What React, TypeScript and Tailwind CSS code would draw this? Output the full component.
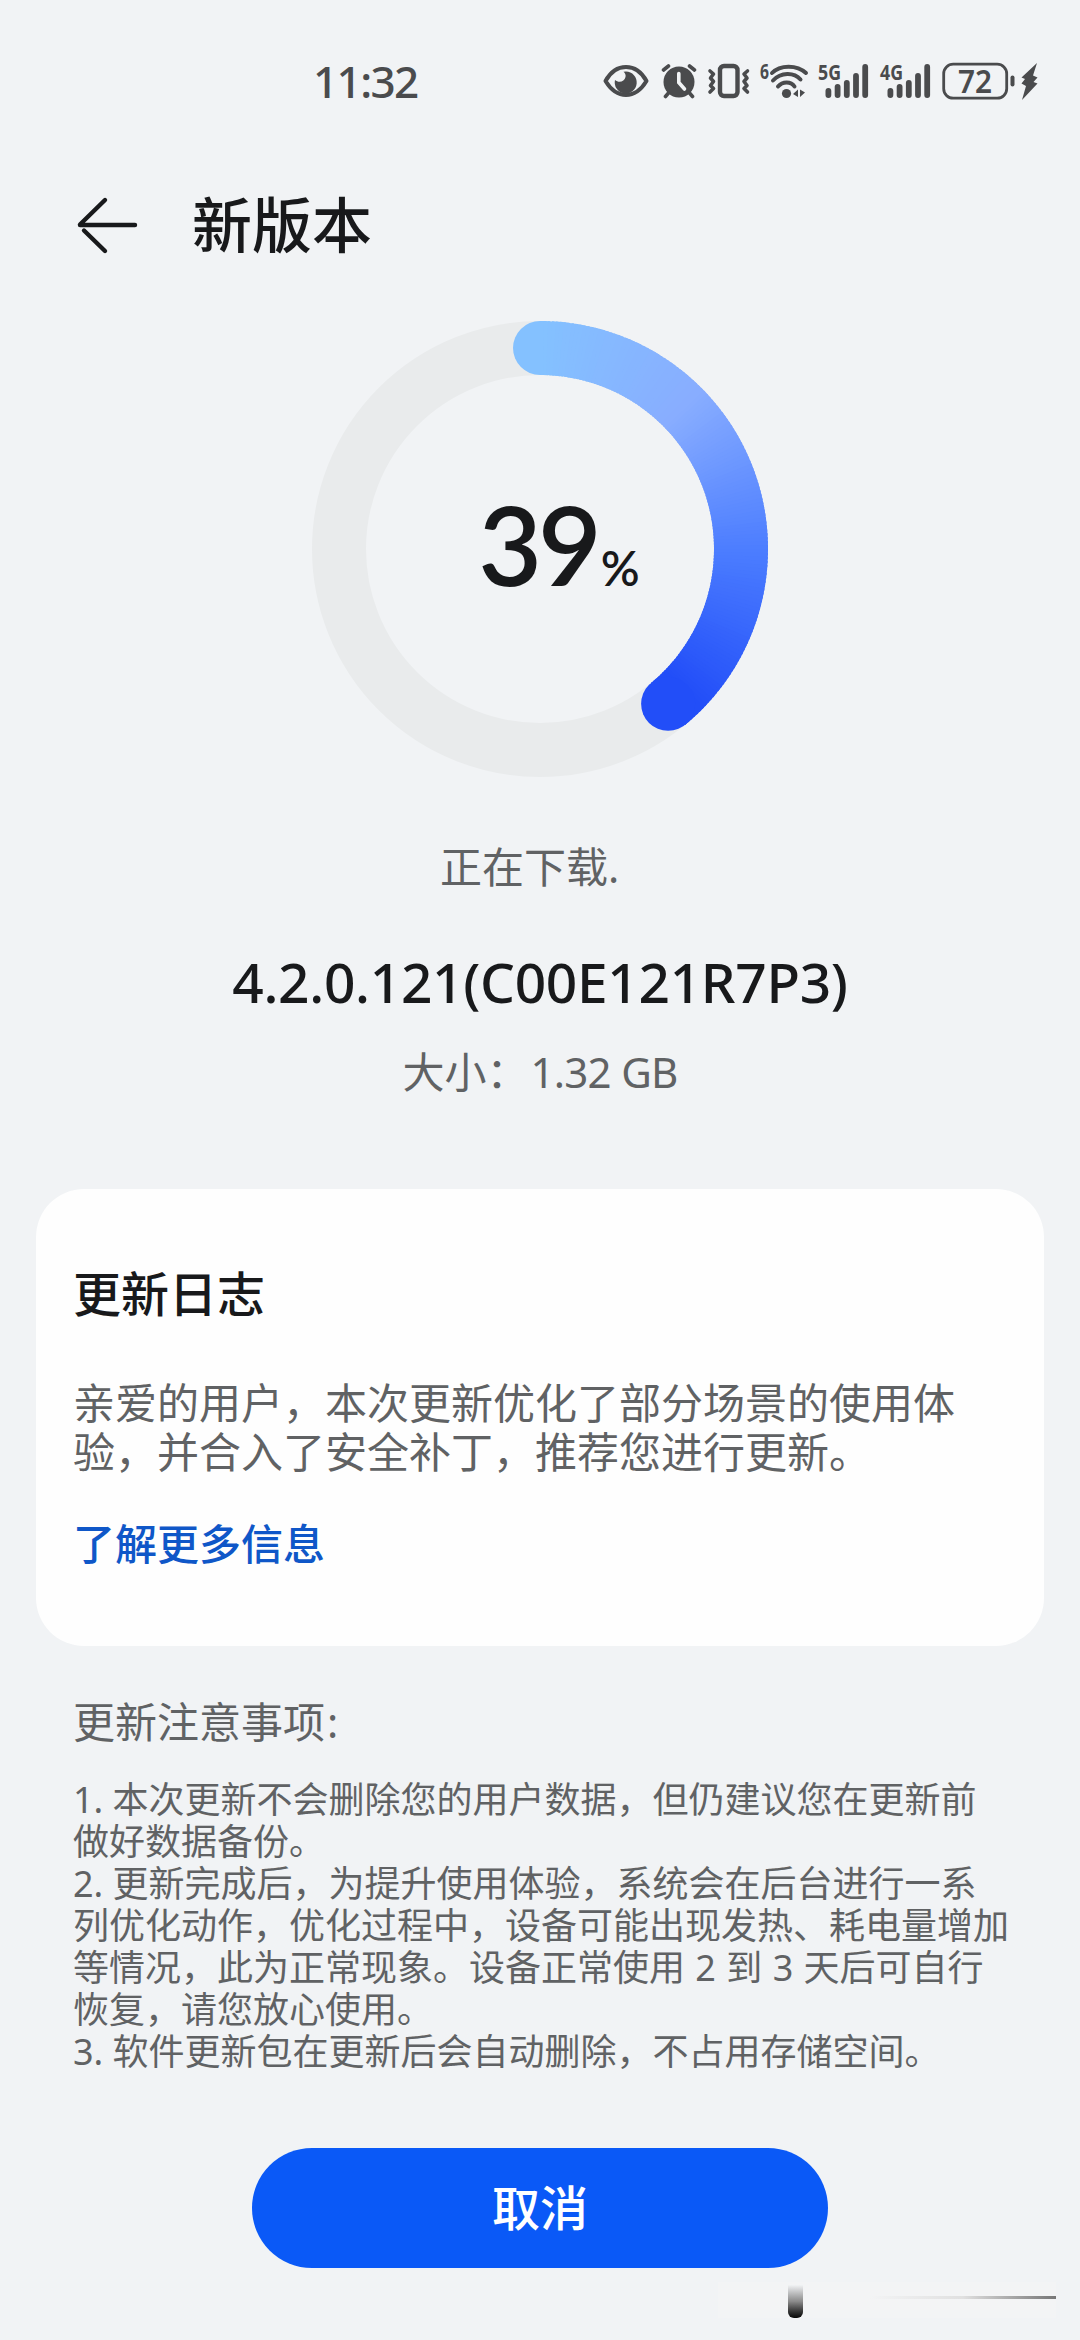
import type { ReactNode } from "react";

const NOTES = [
  "1. 本次更新不会删除您的用户数据，但仍建议您在更新前",
  "做好数据备份。",
  "2. 更新完成后，为提升使用体验，系统会在后台进行一系",
  "列优化动作，优化过程中，设备可能出现发热、耗电量增加",
  "等情况，此为正常现象。设备正常使用 2 到 3 天后可自行",
  "恢复，请您放心使用。",
  "3. 软件更新包在更新后会自动删除，不占用存储空间。",
];

const PROGRESS = 39;

// Colour stops along the arc: [degrees from the top, r, g, b]
const STOPS = [
  [0, 132, 193, 255],
  [45, 136, 173, 255],
  [90, 76, 125, 255],
  [134, 34, 78, 248],
  [360, 34, 78, 248],
];

function arcColor(deg: number) {
  const i = Math.max(
    0,
    STOPS.findIndex((s) => deg <= s[0]) - 1
  );
  const from = STOPS[i];
  const to = STOPS[i + 1];
  const t = (deg - from[0]) / (to[0] - from[0]);
  const ch = [1, 2, 3].map((k) => Math.round(from[k] + (to[k] - from[k]) * t));
  return `rgb(${ch.join(",")})`;
}

function point(deg: number, r: number) {
  const a = (deg * Math.PI) / 180;
  return [229 + r * Math.sin(a), 229 - r * Math.cos(a)];
}

export default function App() {
  return (
    <div className="flex h-[2340px] w-[1080px] flex-col overflow-hidden bg-[#f1f3f5] font-['Noto_Sans','Noto_Sans_CJK_SC',sans-serif] text-[#606264]">
      <StatusBar />

      <header className="mt-[15px] flex h-24 items-center pl-[76px]">
        <svg width="64" height="60" viewBox="0 0 64 60" fill="none" stroke="#18191b" strokeWidth="4.4" strokeLinecap="round">
          <path d="M4 30H59M29 5L4 29.500" />
          <path d="M8 35.500L29 56" />
        </svg>
        <h1 className="ml-[52px] text-[60px] leading-[96px] font-medium text-[#18191b]">
          新版本
        </h1>
      </header>

      <section className="flex flex-col items-center">
        <ProgressRing />
        <p className="mt-[61px] w-[200px] text-[42px] leading-[56px]">正在下载.</p>
        <h2 className="mt-[51px] text-[55px] leading-[72px] font-medium tracking-[-0.3px] whitespace-nowrap text-[#18191b]">
          4.2.0.121(C00E121R7P3)
        </h2>
        <p className="mt-[26px] text-[42px] leading-[56px]">
          大小：<span className="ml-[2px] tracking-[-0.7px]">1.32 GB</span>
        </p>
      </section>

      <section className="mx-9 mt-[89px] h-[457px] rounded-[48px] bg-[#fefefe] px-[37px]">
        <h3 className="mt-[71px] text-[48px] leading-[68px] font-medium text-[#18191b]">
          更新日志
        </h3>
        <p className="mt-[50px] text-[42px] leading-[49px] whitespace-nowrap">
          亲爱的用户，本次更新优化了部分场景的使用体
          <br />
          验，并合入了安全补丁，推荐您进行更新。
        </p>
        <a className="mt-[40px] block text-[42px] leading-[56px] font-medium text-[#0f57c8]">
          了解更多信息
        </a>
      </section>

      <section className="mt-[48px] px-[73px]">
        <h4 className="text-[42px] leading-[56px]">
          更新注意事项<span className="ml-[2px]">:</span>
        </h4>
        <div className="mt-[29px] text-[36px] leading-[42px] whitespace-nowrap">
          {NOTES.map((line) => (
            <p key={line} className="not-first:nth-5:[word-spacing:1px]">
              {line}
            </p>
          ))}
        </div>
      </section>

      <button className="mt-[75px] h-[120px] w-[576px] self-center rounded-full bg-[#0a59f7] text-[48px] font-medium text-white">
        取消
      </button>

      <CornerStreak />
    </div>
  );
}

function ProgressRing() {
  const end = PROGRESS * 3.6;
  const segments = Array.from({ length: Math.ceil(end) }, (_, i) => i);
  const [ex, ey] = point(end, 201);

  return (
    <div className="mt-[47px] grid h-[458px] w-[458px] place-items-center">
      <svg className="col-start-1 row-start-1" width="458" height="458" viewBox="0 0 458 458" fill="none">
        <circle cx="229" cy="229" r="201" stroke="#e9ebec" strokeWidth="54" />
        <circle cx="229" cy="28" r="27" fill={arcColor(0)} />
        {segments.map((deg) => {
          const [x1, y1] = point(deg, 201);
          const [x2, y2] = point(Math.min(deg + 1.6, end), 201);
          return (
            <path
              key={deg}
              d={`M${x1} ${y1}A201 201 0 0 1 ${x2} ${y2}`}
              stroke={arcColor(deg)}
              strokeWidth="54"
            />
          );
        })}
        <circle cx={ex} cy={ey} r="27" fill={arcColor(end)} />
      </svg>
      <div className="col-start-1 row-start-1 mb-[12px] ml-[38px] flex items-baseline font-['Lato',sans-serif] text-[#18191b]">
        <span className="text-[110px] leading-[120px] font-semibold tracking-[-4px]">{PROGRESS}</span>
        <span className="ml-[3px] text-[48px] font-semibold">%</span>
      </div>
    </div>
  );
}

function StatusBar() {
  return (
    <div className="flex h-[162px] items-center text-[#4a4b4d]">
      <span className="ml-[313px] w-[290px] text-[44px] leading-[60px] font-medium tracking-[-1.6px]">
        11:32
      </span>
      <StatusIcons />
    </div>
  );
}

function StatusIcons() {
  return (
    <div className="flex items-center">
      {/* Eye comfort */}
      <svg width="46" height="36" viewBox="0 0 46 36" fill="none">
        <path d="M2.500 18C8 8 15 4 23 4S38 8 43.500 18C38 27 31 32 23 32S8 27 2.500 18Z" stroke="currentColor" strokeWidth="4" strokeLinejoin="round" />
        <path d="M23 8.500A11 11 0 1 1 12 17C16 20.500 21.500 18.500 22.500 14C23 11.800 22 10 20.500 8.800Z" fill="currentColor" />
      </svg>
      {/* Alarm */}
      <svg className="ml-3" width="36" height="36" viewBox="0 0 36 36" fill="none" stroke="currentColor" strokeWidth="4" strokeLinecap="round">
        <circle cx="18" cy="19" r="15.500" fill="currentColor" stroke="none" />
        <path d="M2.500 7L7.500 3M33.500 7L28.500 3M7.500 30L4.500 33.500M28.500 30L31.500 33.500" strokeWidth="3.600" />
        <path d="M17.800 10.500V19.500L23.500 26" stroke="#f1f3f5" strokeWidth="3.600" />
      </svg>
      {/* Vibrate */}
      <svg className="ml-[10px]" width="44" height="36" viewBox="0 0 44 36" fill="none" stroke="currentColor" strokeWidth="4">
        <rect x="13" y="3" width="17.500" height="30" rx="4" strokeWidth="4.400" />
        <path d="M3 8L6.500 11L3.500 15L6.500 18.500L3.500 22.500L6.500 25.500L3 29" strokeLinecap="round" strokeLinejoin="round" strokeWidth="3.600" />
        <path d="M40.500 8L37 11L40 15L37 18.500L40 22.500L37 25.500L40.500 29" strokeLinecap="round" strokeLinejoin="round" strokeWidth="3.600" />
      </svg>
      {/* Wi-Fi 6 */}
      <svg className="ml-[9px] overflow-visible" width="50" height="36" viewBox="0 0 50 36" fill="none">
        <SmallText x={0} y={16} width={9}>6</SmallText>
        <path d="M12 10C20 1.500 37 1.500 46 10M13 17.500C21 9 34 9 40.500 16.500M18 23.500C22.500 18 31 18 34.500 23.500" stroke="currentColor" strokeWidth="4" strokeLinecap="round" />
        <circle cx="26.500" cy="30.500" r="4.600" fill="currentColor" />
        <path d="M33 31L38 26.500V34ZM40 26.500L45 29.500L40 34Z" fill="currentColor" />
      </svg>
      <Signal label="5G" />
      <Signal label="4G" />
      {/* Battery */}
      <svg className="ml-2 overflow-visible" width="98" height="38" viewBox="0 0 98 38" fill="none">
        <rect x="1.700" y="2.200" width="63" height="34" rx="9.500" stroke="currentColor" strokeWidth="2.800" />
        <rect x="68.500" y="13.500" width="4" height="11" rx="2" fill="currentColor" />
        <text x="16" y="30.500" textLength="34" lengthAdjust="spacingAndGlyphs" fill="currentColor" className="font-['Noto_Sans',sans-serif] text-[32px] font-semibold">
          72
        </text>
        <path d="M95 1L79.500 15.500L83 17L79.500 21.500L84 24L80 38L95.500 21.500L91.500 20L95.500 15.500L91 13.500Z" fill="currentColor" />
      </svg>
    </div>
  );
}

function SmallText({ x, y, width, children }: { x: number; y: number; width: number; children: ReactNode }) {
  return (
    <text
      x={x}
      y={y}
      textLength={width}
      lengthAdjust="spacingAndGlyphs"
      fill="currentColor"
      className="font-['Noto_Sans',sans-serif] text-[22px] font-bold"
    >
      {children}
    </text>
  );
}

function Signal({ label }: { label: string }) {
  const bars = [10, 14, 18, 25, 34];
  return (
    <svg className="ml-[9px] overflow-visible" width="53" height="36" viewBox="0 0 53 36">
      <SmallText x={-1} y={17} width={23}>{label}</SmallText>
      {bars.map((h, i) => (
        <rect key={h} x={6.5 + i * 9.2} y={35 - h} width="5.8" height={h} rx="2.9" fill="currentColor" />
      ))}
    </svg>
  );
}

// Faint streaks below the button, with one dark tick and a hairline
function CornerStreak() {
  return (
    <div className="mt-[14px] ml-[718px] flex h-9 w-[338px] items-start bg-[#f3f4f5]">
      <div className="mt-[3px] ml-[70px] h-[33px] w-[15px] rounded-b-md bg-linear-to-b from-[#f1f3f5] via-[#8a8a8a] to-[#080808]" />
      <div className="mt-[14px] ml-[67px] h-[3px] flex-1 bg-linear-to-r from-transparent via-[#e0e0e0] to-[#777777]" />
    </div>
  );
}
